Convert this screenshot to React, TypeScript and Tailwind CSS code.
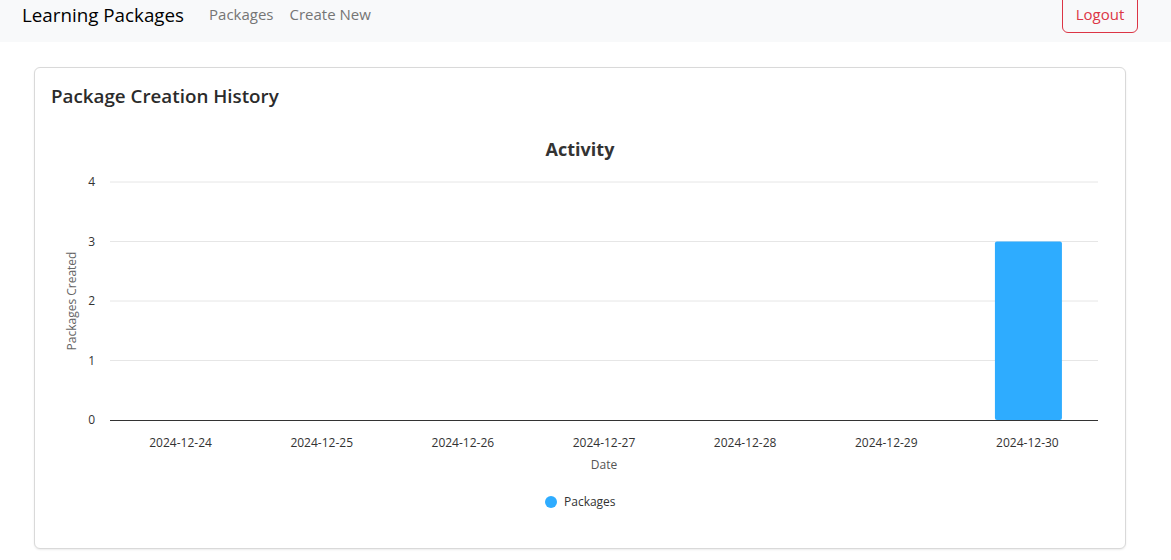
import React from 'react';

const dates = ['2024-12-24', '2024-12-25', '2024-12-26', '2024-12-27', '2024-12-28', '2024-12-29', '2024-12-30'];
const counts = [0, 0, 0, 0, 0, 0, 3];

// chart geometry (svg coords, svg placed at card inner left x=51)
const left = 59;
const right = 1047;
const top = 57;
const unit = 59.5;
const base = top + unit * 4;
const colW = (right - left) / dates.length;

const ActivityChart: React.FC = () => (
  <svg width={1058} height={400} className="block" style={{ fontFamily: '"Segoe UI", "Open Sans", sans-serif' }}>
    <text x={529} y={31} textAnchor="middle" fontSize={18} fontWeight={700} fill="#333">
      Activity
    </text>
    {[4, 3, 2, 1].map((v) => (
      <g key={v}>
        <line x1={left} x2={right} y1={base - v * unit} y2={base - v * unit} stroke="#e6e6e6" strokeWidth={1} />
        <text x={44} y={base - v * unit + 4} textAnchor="end" fontSize={12} fill="#333">
          {v}
        </text>
      </g>
    ))}
    <text x={44} y={base + 4} textAnchor="end" fontSize={12} fill="#333">
      0
    </text>
    {counts.map((c, i) =>
      c > 0 ? (
        <rect
          key={i}
          x={left + colW * i + (colW - 67) / 2 + 1}
          y={base - c * unit}
          width={67}
          height={c * unit}
          rx={2}
          fill="#2eacff"
        />
      ) : null
    )}
    <line x1={left} x2={right} y1={base + 0.5} y2={base + 0.5} stroke="#333" strokeWidth={1} />
    {dates.map((d, i) => (
      <text key={d} x={left + colW * (i + 0.5)} y={base + 27} textAnchor="middle" fontSize={12} fill="#333">
        {d}
      </text>
    ))}
    <text x={553} y={base + 49} textAnchor="middle" fontSize={12} fill="#555">
      Date
    </text>
    <text
      x={0}
      y={0}
      transform={`translate(25 ${top + unit * 2}) rotate(-90)`}
      textAnchor="middle"
      fontSize={12}
      fill="#666"
    >
      Packages Created
    </text>
    <circle cx={500} cy={377} r={6} fill="#2eacff" />
    <text x={513} y={381} fontSize={12} fill="#333">
      Packages
    </text>
  </svg>
);

export default function App() {
  return (
    <div className="h-[560px] overflow-hidden bg-white text-[#212529]" style={{ fontFamily: '"Segoe UI", "Open Sans", sans-serif' }}>
      <nav className="flex h-[42px] items-start bg-[#f8f9fa] pl-[22px] pr-[33px]">
        <span className="mt-[0px] text-[18.8px] leading-[30px] text-black">Learning Packages</span>
        <div className="ml-[25px] mt-[1px] flex gap-4 text-[15px] leading-[26px] text-[#757575]">
          <a>Packages</a>
          <a>Create New</a>
        </div>
        <button className="ml-auto mt-[-6px] h-[39px] w-[76px] rounded-[6px] border border-[#dc3545] pt-[2px] text-[15px] text-[#dc3545]">
          Logout
        </button>
      </nav>
      <div className="pl-[34px] pr-[45px] pt-[25px]">
        <div className="h-[482px] rounded-[6px] border border-[#d9d9d9] bg-white p-4 shadow-[0_1px_2px_rgba(0,0,0,0.08)]">
          <h2 className="mt-[-2px] text-[18.8px] font-semibold leading-[28px] text-[#2b2b2b]">Package Creation History</h2>
          <div className="mt-[15px]">
            <ActivityChart />
          </div>
        </div>
      </div>
    </div>
  );
}
